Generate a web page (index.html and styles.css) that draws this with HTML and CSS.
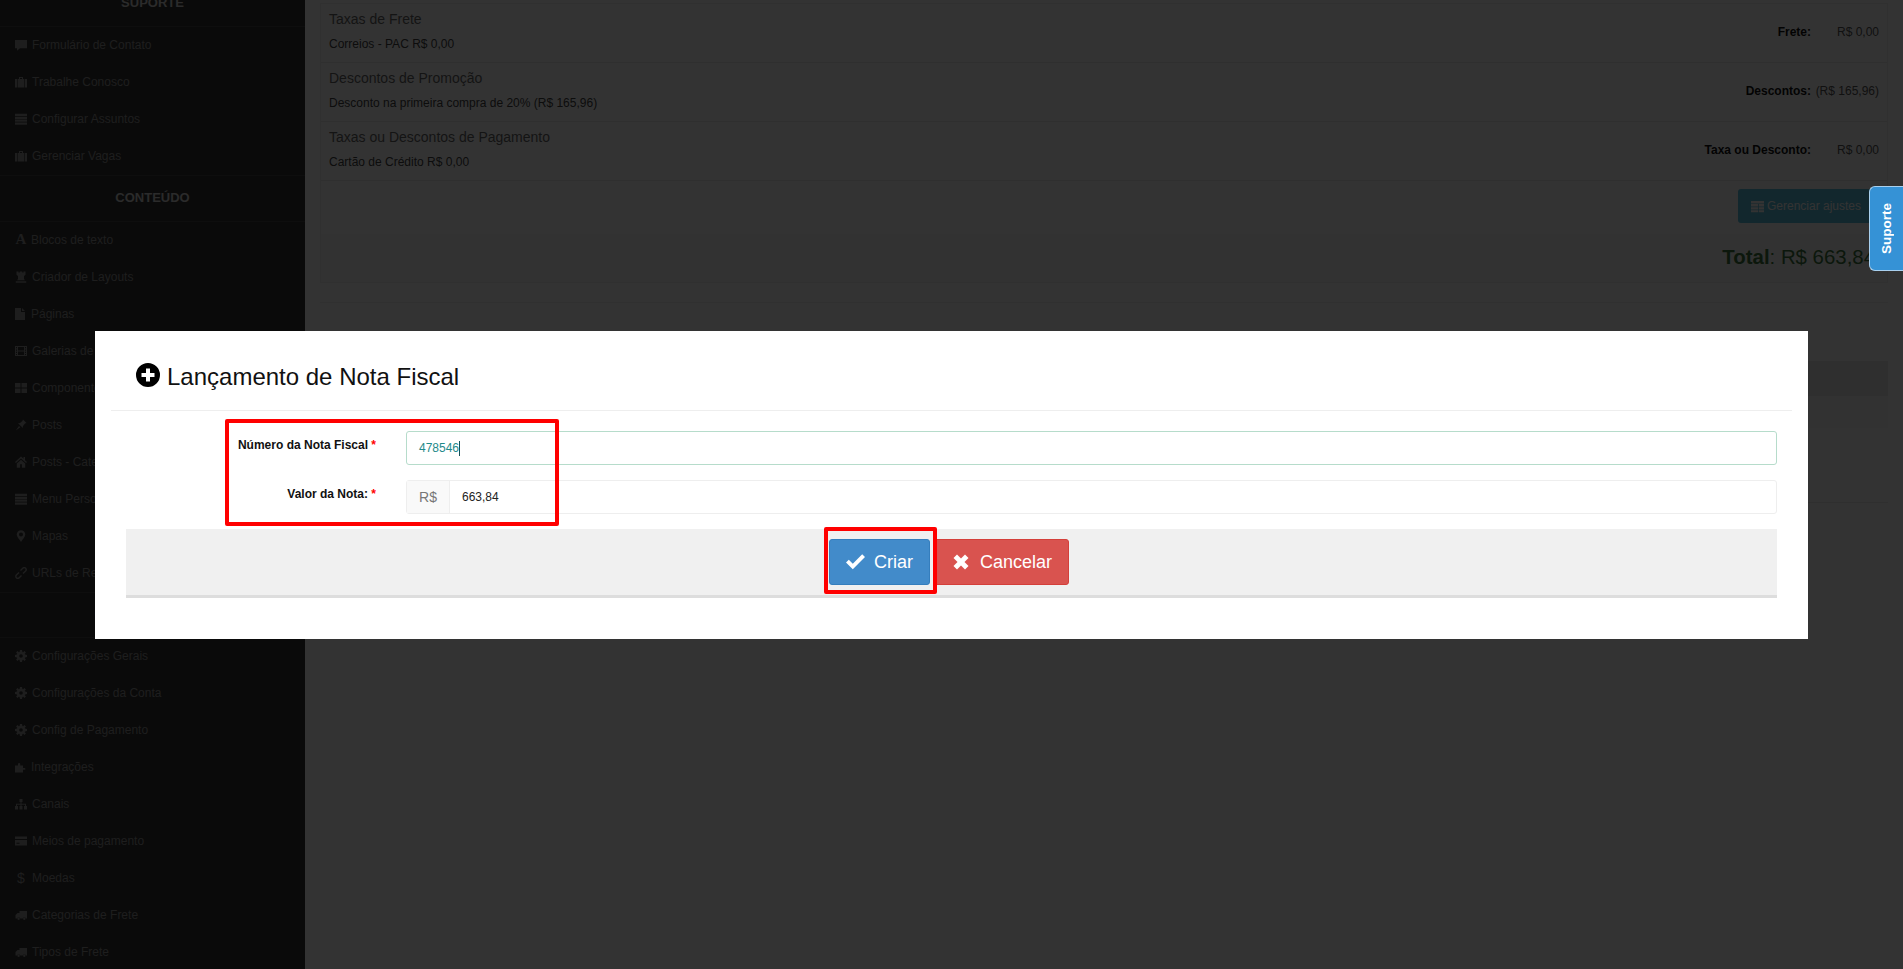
FILE: index.html
```
<!DOCTYPE html>
<html lang="pt-BR">
<head>
<meta charset="utf-8">
<title>Lançamento de Nota Fiscal</title>
<link rel="stylesheet" href="styles.css">
</head>
<body>
<svg class="defs" width="0" height="0" aria-hidden="true">
  <symbol id="i-comment" viewBox="0 0 12 12"><path d="M0 1h12v8.2H5L2 11.8V9.2H0z"/></symbol>
  <symbol id="i-brief" viewBox="0 0 12 12"><path d="M0 3h2v8.500H0zM2.600 3h6.800v8.500H2.600zM10 3h2v8.500h-2zM4 3V1h4v2H7V2H5v1z"/></symbol>
  <symbol id="i-bars" viewBox="0 0 12 12"><path d="M0 .8h12v2.200H0zM0 3.700h12v2.200H0zM0 6.600h12v2.200H0zM0 9.500h12v2.200H0z"/></symbol>
  <symbol id="i-rook" viewBox="0 0 12 12"><path d="M1.500.5h2v1h1.300v-1h2.400v1h1.300v-1h2v3.200L9 5v3l1 1.300H2L3 8V5L1.500 3.700zM.8 10.200h10.400v1.500H.8z"/></symbol>
  <symbol id="i-file" viewBox="0 0 10 12"><path d="M0 0h6v4h4v8H0zM7 0l3 3H7z"/></symbol>
  <symbol id="i-film" viewBox="0 0 12 12"><path fill-rule="evenodd" d="M0 1h12v10H0zM1 2v1.300h1V2zM1 4.400v1.300h1V4.400zM1 6.800v1.300h1V6.800zM1 8.900v1.100h1V8.900zM10 2v1.300h1V2zM10 4.400v1.300h1V4.400zM10 6.800v1.300h1V6.800zM10 8.900v1.100h1V8.900zM3 2v3.500h6V2zM3 6.500V10h6V6.500z"/></symbol>
  <symbol id="i-grid" viewBox="0 0 12 12"><path d="M0 1h5.500v4.500H0zM6.500 1H12v4.500H6.500zM0 6.500h5.500V11H0zM6.500 6.500H12V11H6.500z"/></symbol>
  <symbol id="i-pin" viewBox="0 0 12 12"><path d="M8 .5L11.500 4 10 4.600 8 7 7.800 9 3 4.200 5 4 7.400 2zM4 7L.8 11.500 5.300 8.300z"/></symbol>
  <symbol id="i-home" viewBox="0 0 12 12"><path d="M6 .6L0 6l.9 1L6 2.500 11.100 7l.9-1L10 4.200V1H8.500v1.800zM1.800 7.400v4.400h3.300V8.300h1.800v3.500h3.300V7.400L6 3.700z"/></symbol>
  <symbol id="i-mark" viewBox="0 0 12 12"><path fill-rule="evenodd" d="M6 .2a4.300 4.300 0 0 1 4.300 4.300C10.300 6.700 7.500 9.500 6 12 4.500 9.500 1.700 6.700 1.700 4.500A4.300 4.300 0 0 1 6 .2zM6 2.500a2 2 0 1 0 0 4 2 2 0 0 0 0-4z"/></symbol>
  <symbol id="i-link" viewBox="0 0 12 12"><path fill="none" stroke="currentColor" stroke-width="1.400" d="M5.500 3.500L7.800 1.200a1.900 1.900 0 0 1 2.800 2.800L8 6.500M6.500 8.500L4.200 10.800a1.900 1.900 0 0 1-2.800-2.800L4 5.500"/></symbol>
  <symbol id="i-cog" viewBox="0 0 12 12"><path fill-rule="evenodd" d="M5 0H7L7.400 1.900 8.200 2.200 9.500 1.100 10.900 2.500 9.800 3.800 10.100 4.600 12 5V7L10.100 7.400 9.800 8.200 10.900 9.500 9.500 10.900 8.200 9.800 7.400 10.100 7 12H5L4.600 10.100 3.800 9.800 2.500 10.900 1.100 9.500 2.200 8.200 1.900 7.400 0 7V5L1.900 4.600 2.200 3.800 1.100 2.500 2.500 1.100 3.800 2.200 4.600 1.900zM6 4.200a1.800 1.800 0 1 0 0 3.600 1.800 1.800 0 0 0 0-3.600z"/></symbol>
  <symbol id="i-puzzle" viewBox="0 0 12 12"><path d="M0 4.500h3V3a1.100 1.100 0 0 1 2.200 0v1.500h2.800V7h1.500a.9.9 0 0 1 0 1.800H8v2.700H0z"/></symbol>
  <symbol id="i-site" viewBox="0 0 12 12"><path d="M4.500 1h3v3h-3zM5.500 4h1v1.700H11V8h-1V6.700H6.500V8h-1V6.700H2V8H1V5.700h4.500zM0 8h3v3.500H0zM4.500 8h3v3.500h-3zM9 8h3v3.500H9z"/></symbol>
  <symbol id="i-card" viewBox="0 0 12 12"><path fill-rule="evenodd" d="M0 1.500h12V4H0zM0 5h12v5.500H0zM1.500 7.800v1h3v-1z"/></symbol>
  <symbol id="i-truck" viewBox="0 0 12 12"><path d="M4.500 2H12v7.500h-1.100a1.600 1.600 0 0 0-3.100 0H5.200a1.600 1.600 0 0 0-3.100 0H.5V6l2-2h2zM3.600 8.600a1.200 1.200 0 1 1 0 2.400 1.200 1.200 0 0 1 0-2.400zM9.300 8.600a1.200 1.200 0 1 1 0 2.400 1.200 1.200 0 0 1 0-2.400z"/></symbol>
  <symbol id="i-list" viewBox="0 0 12 12"><path d="M0 1h12v2.200H0zM0 3.800h6.500V6H0zM7.200 3.800H12V6H7.200zM0 6.600h6.500v2.200H0zM7.200 6.600H12v2.200H7.200zM0 9.400h6.500v1.800H0zM7.200 9.400H12v1.800H7.200z"/></symbol>
  <symbol id="i-plus" viewBox="0 0 24 24"><path fill-rule="evenodd" d="M12 0a12 12 0 1 1 0 24 12 12 0 0 1 0-24zM10 5.500v4.500H5.500v4H10v4.500h4V14h4.500v-4H14V5.500z"/></symbol>
  <symbol id="i-ok" viewBox="0 0 19 16"><path d="M0 8.500L2.800 5.700 6.800 9.700 16.200.3 19 3.100 6.800 15.300z"/></symbol>
  <symbol id="i-x" viewBox="0 0 16 16"><path d="M4 .5L8 4.500 12 .5 15.500 4 11.500 8 15.500 12 12 15.500 8 11.500 4 15.500 .5 12 4.500 8 .5 4z"/></symbol>
</svg>

<div class="page">
  <aside class="sidebar">
    <div class="side-title">SUPORTE</div>
    <a class="side-item"><svg class="ic"><use href="#i-comment"/></svg>Formulário de Contato</a>
    <a class="side-item"><svg class="ic"><use href="#i-brief"/></svg>Trabalhe Conosco</a>
    <a class="side-item"><svg class="ic"><use href="#i-bars"/></svg>Configurar Assuntos</a>
    <a class="side-item"><svg class="ic"><use href="#i-brief"/></svg>Gerenciar Vagas</a>
    <div class="side-title">CONTEÚDO</div>
    <a class="side-item tight"><span class="glyph-a">A</span>Blocos de texto</a>
    <a class="side-item"><svg class="ic"><use href="#i-rook"/></svg>Criador de Layouts</a>
    <a class="side-item narrow"><svg class="ic"><use href="#i-file"/></svg>Páginas</a>
    <a class="side-item"><svg class="ic"><use href="#i-film"/></svg>Galerias de Imagens</a>
    <a class="side-item"><svg class="ic"><use href="#i-grid"/></svg>Componentes</a>
    <a class="side-item"><svg class="ic"><use href="#i-pin"/></svg>Posts</a>
    <a class="side-item"><svg class="ic"><use href="#i-home"/></svg>Posts - Categorias</a>
    <a class="side-item"><svg class="ic"><use href="#i-bars"/></svg>Menu Personalizado</a>
    <a class="side-item"><svg class="ic"><use href="#i-mark"/></svg>Mapas</a>
    <a class="side-item"><svg class="ic"><use href="#i-link"/></svg>URLs de Redirecionamento</a>
    <div class="side-title short">CONFIGURAÇÕES</div>
    <a class="side-item"><svg class="ic"><use href="#i-cog"/></svg>Configurações Gerais</a>
    <a class="side-item"><svg class="ic"><use href="#i-cog"/></svg>Configurações da Conta</a>
    <a class="side-item"><svg class="ic"><use href="#i-cog"/></svg>Config de Pagamento</a>
    <a class="side-item tight"><svg class="ic"><use href="#i-puzzle"/></svg>Integrações</a>
    <a class="side-item"><svg class="ic"><use href="#i-site"/></svg>Canais</a>
    <a class="side-item"><svg class="ic"><use href="#i-card"/></svg>Meios de pagamento</a>
    <a class="side-item"><span class="glyph-d">$</span>Moedas</a>
    <a class="side-item"><svg class="ic"><use href="#i-truck"/></svg>Categorias de Frete</a>
    <a class="side-item"><svg class="ic"><use href="#i-truck"/></svg>Tipos de Frete</a>
  </aside>

  <main class="main">
    <section class="panel">
      <div class="adj-row">
        <div><h4 class="adj-title">Taxas de Frete</h4><p class="adj-sub">Correios - PAC R$ 0,00</p></div>
        <div class="adj-sum"><b>Frete:</b><span>R$ 0,00</span></div>
      </div>
      <div class="adj-row">
        <div><h4 class="adj-title">Descontos de Promoção</h4><p class="adj-sub">Desconto na primeira compra de 20% (R$ 165,96)</p></div>
        <div class="adj-sum"><b>Descontos:</b><span>(R$ 165,96)</span></div>
      </div>
      <div class="adj-row">
        <div><h4 class="adj-title">Taxas ou Descontos de Pagamento</h4><p class="adj-sub">Cartão de Crédito R$ 0,00</p></div>
        <div class="adj-sum"><b>Taxa ou Desconto:</b><span>R$ 0,00</span></div>
      </div>
      <div class="adj-actions"><a class="btn-info"><svg class="ic-btn"><use href="#i-list"/></svg>Gerenciar ajustes</a></div>
      <div class="adj-total"><b>Total</b>: R$ 663,84</div>
    </section>
    <div class="rule-gap"></div>
    <div class="tbl-head"></div>
    <div class="tbl-row"></div>
    <div class="tbl-end"></div>
  </main>
</div>

<div class="backdrop"></div>

<a class="support-tab"><span>Suporte</span></a>

<div class="modal">
  <h3 class="modal-title"><svg class="ic-title"><use href="#i-plus"/></svg>Lançamento de Nota Fiscal</h3>
  <form class="modal-form">
    <div class="form-row">
      <label class="form-label">Número da Nota Fiscal <i>*</i></label>
      <div class="field focus"><span class="caret">478546</span></div>
    </div>
    <div class="form-row">
      <label class="form-label">Valor da Nota: <i>*</i></label>
      <div class="field group"><span class="addon">R$</span><span class="value">663,84</span></div>
    </div>
    <div class="form-actions">
      <a class="btn btn-blue"><svg class="ic-ok"><use href="#i-ok"/></svg>Criar</a>
      <a class="btn btn-red"><svg class="ic-x"><use href="#i-x"/></svg>Cancelar</a>
    </div>
  </form>
  <div class="mark mark-fields"></div>
  <div class="mark mark-button"></div>
</div>
</body>
</html>
```

FILE: styles.css
```
* { box-sizing: border-box; }
html, body { height: 100%; margin: 0; }
body {
  overflow: hidden;
  background: #fff;
  color: #333;
  font-family: "Liberation Sans", Arial, sans-serif;
  font-size: 12px;
}
.defs { position: absolute; }
svg { fill: currentColor; display: block; flex: none; }

.page { display: flex; height: 969px; overflow: hidden; }

/* sidebar */
.sidebar {
  flex: 0 0 305px;
  height: 1100px;
  margin-top: -20px;
  background: #333;
  color: #949494;
  display: flex;
  flex-direction: column;
}
.side-title {
  flex: 0 0 47px;
  display: flex;
  align-items: center;
  justify-content: center;
  padding-bottom: 3px;
  border-top: 1px solid #474747;
  border-bottom: 1px solid #474747;
  font-size: 13px;
  font-weight: 700;
  color: #d4d4d4;
}
.side-title.short { flex-basis: 46px; }
.side-item {
  flex: 0 0 37px;
  display: flex;
  align-items: center;
  gap: 5px;
  padding: 0 0 2px 15px;
}
.side-item.tight { gap: 4px; }
.side-item.narrow { gap: 6px; }
.ic { width: 12px; height: 12px; }
.narrow .ic { width: 10px; }
.glyph-a {
  width: 12px;
  font-family: "Liberation Serif", serif;
  font-size: 15px;
  font-weight: 700;
  text-align: center;
}
.glyph-d { width: 12px; font-size: 14px; text-align: center; }

/* main content behind the dialog */
.main { flex: 1; min-width: 0; padding: 3px 15px 0; }
.panel {
  border: 1px solid #f0f0f0;
  border-bottom: 0;
}
.adj-row {
  height: 59px;
  padding: 5px 8px 0;
  display: flex;
  justify-content: space-between;
  border-bottom: 1px solid #ececec;
}
.adj-title { margin: 0; font-size: 14px; font-weight: 400; line-height: 20px; color: #666; }
.adj-sub { margin: 7px 0 0; line-height: 17px; color: #444; }
.adj-sum { display: flex; align-items: center; padding-bottom: 7px; color: #555; }
.adj-sum b { color: #111; }
.adj-sum span { width: 68px; text-align: right; }
.adj-actions {
  height: 53px;
  padding: 8px 8px 0;
  display: flex;
  justify-content: flex-end;
}
.btn-info {
  width: 141px;
  height: 34px;
  padding-left: 13px;
  display: flex;
  align-items: center;
  gap: 3px;
  border-radius: 3px;
  background: #5bc0de;
  color: #fff;
}
.ic-btn { width: 13px; height: 13px; }
.adj-total {
  height: 49px;
  padding: 0 12px 2px 0;
  display: flex;
  align-items: center;
  justify-content: flex-end;
  white-space: pre;
  background: #fafafa;
  border-bottom: 1px solid #f0f0f0;
  font-size: 20.400px;
  color: #3c763d;
}
.rule-gap { height: 20px; border-bottom: 1px solid #eee; }
.tbl-head { height: 35px; margin-top: 58px; background: #ebebeb; }
.tbl-row { height: 32px; background: #f8f8f8; }
.tbl-end { height: 75px; border-bottom: 1px solid #e8e8e8; }

/* dim layer */
.backdrop { position: fixed; inset: 0; background: rgba(0, 0, 0, .8); }

.support-tab {
  position: fixed;
  top: 186px;
  right: 0;
  width: 34px;
  height: 85px;
  display: flex;
  align-items: center;
  justify-content: center;
  border: 1px solid #a9d0ee;
  border-right: 0;
  border-radius: 6px 0 0 6px;
  background: #3592d6;
  color: #fff;
  font-size: 13.500px;
  font-weight: 700;
}
.support-tab span { writing-mode: vertical-rl; transform: rotate(180deg); }

/* dialog */
.modal {
  position: fixed;
  top: 331px;
  left: 95px;
  width: 1713px;
  height: 308px;
  padding: 0 16px;
  background: #fff;
}
.modal-title {
  height: 80px;
  margin: 0;
  padding: 32px 0 0 25px;
  display: flex;
  align-items: flex-start;
  gap: 7px;
  border-bottom: 1px solid #eee;
  font-size: 24px;
  font-weight: 400;
  line-height: 28px;
  color: #111;
}
.ic-title { width: 24px; height: 24px; color: #000; }
.modal-form { padding: 20px 15px 0; }
.form-row { display: flex; gap: 30px; margin-bottom: 15px; }
.form-label {
  flex: 0 0 250px;
  padding-top: 6px;
  text-align: right;
  font-weight: 700;
  color: #111;
  line-height: 16px;
}
.form-label i { font-style: normal; color: #f00; }
.field {
  flex: 1;
  height: 34px;
  display: flex;
  align-items: center;
  border: 1px solid #eee;
  border-radius: 3px;
  color: #222;
}
.field.focus { padding-left: 12px; border-color: #b6dccb; color: #1f8a8a; }
.caret { border-right: 1px solid #14505a; line-height: 15px; }
.addon {
  width: 43px;
  height: 100%;
  display: flex;
  align-items: center;
  justify-content: center;
  background: #f9f9f9;
  border-right: 1px solid #eee;
  font-size: 14px;
  color: #777;
}
.value { padding-left: 12px; }
.form-actions {
  height: 69px;
  padding: 10px 5px 0 0;
  display: flex;
  justify-content: center;
  gap: 4px;
  background: #f0f0f0;
  border-bottom: 3px solid #ddd;
}
.btn {
  height: 46px;
  display: flex;
  align-items: center;
  border-radius: 3px;
  color: #fff;
  font-size: 18px;
}
.btn-blue { width: 101px; padding-left: 16px; gap: 9px; background: #428bca; border: 1px solid #357ebd; }
.btn-red { width: 135px; padding-left: 18px; gap: 11px; background: #d9534f; border: 1px solid #d43f3a; }
.ic-ok { width: 19px; height: 16px; }
.ic-x { width: 16px; height: 16px; }

/* red annotation frames over the screenshot */
.mark { position: absolute; border: 4px solid #f00; border-radius: 2px; }
.mark-fields { left: 130px; top: 88px; width: 334px; height: 107px; }
.mark-button { left: 729px; top: 196px; width: 113px; height: 67px; }
```
